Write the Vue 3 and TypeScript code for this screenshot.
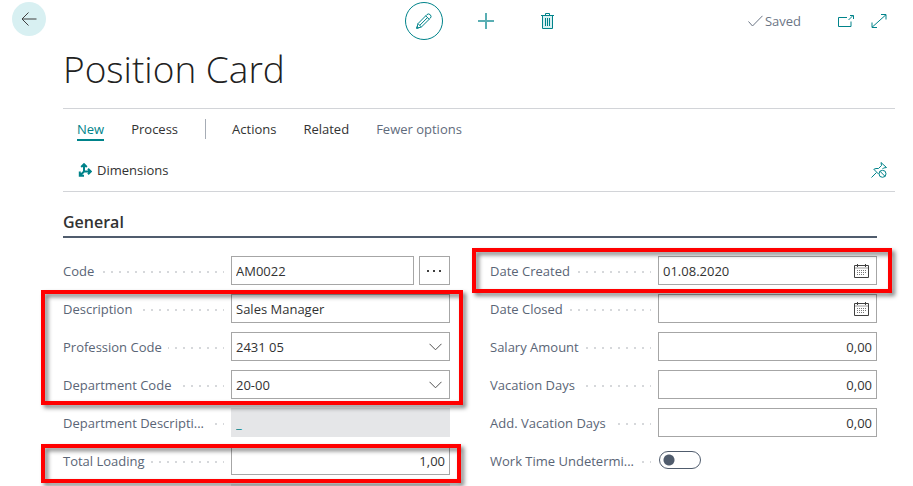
<script setup lang="ts">
import { ref } from 'vue'

interface Field {
  id: string
  label: string
  kind: 'text' | 'lookup' | 'select' | 'readonly' | 'number' | 'date' | 'toggle'
  value: string
}

interface Group {
  mark: string
  fields: Field[]
}

const left = ref<Group[]>([
  { mark: '', fields: [{ id: 'code', label: 'Code', kind: 'lookup', value: 'AM0022' }] },
  {
    mark: 'mark-block',
    fields: [
      { id: 'description', label: 'Description', kind: 'text', value: 'Sales Manager' },
      { id: 'profession', label: 'Profession Code', kind: 'select', value: '2431 05' },
      { id: 'department', label: 'Department Code', kind: 'select', value: '20-00' },
    ],
  },
  { mark: '', fields: [{ id: 'department-text', label: 'Department Descripti...', kind: 'readonly', value: '_' }] },
  { mark: 'mark-total', fields: [{ id: 'loading', label: 'Total Loading', kind: 'number', value: '1,00' }] },
])

const right = ref<Group[]>([
  { mark: 'mark-date', fields: [{ id: 'created', label: 'Date Created', kind: 'date', value: '01.08.2020' }] },
  {
    mark: '',
    fields: [
      { id: 'closed', label: 'Date Closed', kind: 'date', value: '' },
      { id: 'salary', label: 'Salary Amount', kind: 'number', value: '0,00' },
      { id: 'vacation', label: 'Vacation Days', kind: 'number', value: '0,00' },
      { id: 'add-vacation', label: 'Add. Vacation Days', kind: 'number', value: '0,00' },
      { id: 'work-time', label: 'Work Time Undetermi...', kind: 'toggle', value: '' },
    ],
  },
])

const columns = [left, right]
</script>

<template>
  <div class="page">
    <header class="topbar">
      <button class="back" type="button" aria-label="Back">
        <svg width="16" height="14" viewBox="0 0 16 14"><path d="M15.500 7H1M7.500 .5L1 7l6.500 6.500" /></svg>
      </button>
      <div class="tools">
        <button class="tool edit" type="button" aria-label="Edit">
          <svg width="16" height="16" viewBox="0 0 16 16">
            <path d="M.7 15.300l1.300-4.700L11 1.500a2.500 2.500 0 0 1 3.500 3.500L5.400 14zM2 10.600L5.400 14M9.700 2.800l3.500 3.500M3.800 12.300l7.600-7.600M.7 15.300l1.800-.5-1.300-1.300z" />
          </svg>
        </button>
        <button class="tool" type="button" aria-label="New">
          <svg width="16" height="16" viewBox="0 0 16 16"><path class="plus" d="M8 0v16M0 8h16" /></svg>
        </button>
        <button class="tool delete" type="button" aria-label="Delete">
          <svg width="13" height="16" viewBox="0 0 13 16">
            <path class="tint" d="M2 3h9v12H2z" />
            <path d="M0 2.500h13M4.500 2.500V.5h4v2M1.500 2.500v13h10v-13M4.500 5v8M6.500 5v8M8.500 5v8" />
          </svg>
        </button>
      </div>
      <div class="status">
        <span class="saved">
          <svg width="15" height="12" viewBox="0 0 15 12"><path d="M.5 6.500l4 4.500L14.500 .8" /></svg>Saved
        </span>
        <button class="tool" type="button" aria-label="Open in new window">
          <svg width="16" height="12" viewBox="0 0 16 12">
            <path d="M9 2.500H.5v9h12.500V6.500M10.500 5l4.500-4.500M12 .5h3.500V4" />
          </svg>
        </button>
        <button class="tool" type="button" aria-label="Expand">
          <svg width="16" height="14" viewBox="0 0 16 14"><path d="M1 13.300L15 .7M10 .5h5v5M1 8.500v5h5" /></svg>
        </button>
      </div>
    </header>

    <main class="card">
      <h1>Position Card</h1>

      <nav class="ribbon">
        <div class="tabs">
          <a class="active" href="#new">New</a>
          <a href="#process">Process</a>
          <a class="actions" href="#actions">Actions</a>
          <a href="#related">Related</a>
          <a class="soft" href="#fewer">Fewer options</a>
        </div>
        <div class="commands">
          <a class="command" href="#dimensions">
            <svg width="14" height="14" viewBox="0 0 14 14">
              <path class="bold" d="M6 9V1.500M3.200 4L6 1.200 8.800 4M6 8.500h6.500M10 5.700l2.800 2.800L10 11.300M6 8.500L2 12.500M1.800 8.500v4.200H6" />
            </svg>
            Dimensions
          </a>
          <button class="tool" type="button" aria-label="Unpin">
            <svg width="16" height="16" viewBox="0 0 16 16">
              <path d="M.5 15.500L5.500 10.500M7.500 12L2.800 7.300 5 6.500h2.500L10.500 3.500 10 .5l5.500 5-3 .5-1 1" />
              <circle cx="11.500" cy="11.800" r="3.500" /><path d="M9 9.300l5 5" />
            </svg>
          </button>
        </div>
      </nav>

      <section class="general">
        <h2>General</h2>
        <form class="columns" @submit.prevent>
          <div v-for="(column, c) in columns" :key="c" class="column">
            <div v-for="(group, g) in column.value" :key="g" class="group" :class="group.mark">
              <div v-for="field in group.fields" :key="field.id" class="row">
                <label :for="field.id">{{ field.label }}</label>
                <span class="dots"></span>
                <div class="control" :class="field.kind">
                  <input v-if="field.kind === 'toggle'" :id="field.id" class="switch" type="checkbox" role="switch" />
                  <template v-else-if="field.kind === 'select'">
                    <select :id="field.id" v-model="field.value">
                      <option>{{ field.value }}</option>
                    </select>
                    <svg class="chevron" width="13" height="8" viewBox="0 0 13 8"><path d="M.5 .8l6 6 6-6" /></svg>
                  </template>
                  <template v-else>
                    <input :id="field.id" v-model="field.value" type="text" :readonly="field.kind === 'readonly'" />
                    <button v-if="field.kind === 'lookup'" class="more" type="button" aria-label="More">
                      <svg width="15" height="2" viewBox="0 0 15 2"><path d="M0 0h2v2H0zM6 0h2v2H6zM12 0h2v2h-2z" /></svg>
                    </button>
                    <button v-if="field.kind === 'date'" class="calendar" type="button" aria-label="Pick a date">
                      <svg width="15" height="14" viewBox="0 0 15 14">
                        <path class="frame" d="M.5 1.500h14v12H.5zM3.500 0v3M11.500 0v3" />
                        <path class="band" d="M1 4h13" />
                        <path class="days" d="M3 6.500h10M3 8.500h10M3 10.500h8" />
                      </svg>
                    </button>
                  </template>
                </div>
              </div>
            </div>
            <div v-if="c === 0" class="row"><div class="next"></div></div>
          </div>
        </form>
      </section>
    </main>
  </div>
</template>

<style>
body {
  margin: 0;
  background: #fff;
}
</style>

<style scoped>
.page {
  height: 100vh;
  overflow: hidden;
  box-sizing: border-box;
  color: #323232;
  font: 13px/20px "Open Sans", "Segoe UI", sans-serif;
}

.page *,
.page *::after {
  box-sizing: border-box;
}

button {
  display: flex;
  align-items: center;
  justify-content: center;
  margin: 0;
  padding: 0;
  border: 0;
  background: none;
}

svg {
  display: block;
  flex: none;
  fill: none;
  stroke: #00838a;
}

a {
  color: inherit;
  text-decoration: none;
}

.topbar {
  display: grid;
  grid-template-columns: 51px 1fr auto 1fr;
  height: 42px;
  padding: 0 18px 0 12px;
}

.back {
  width: 34px;
  height: 34px;
  margin-top: 2px;
  border-radius: 50%;
  background: #d8f0f2;
}

.back svg {
  stroke: #404040;
}

.tools {
  display: flex;
  grid-column: 3;
  align-items: center;
  gap: 35px;
}

.tool {
  height: 20px;
}

.edit {
  width: 38px;
  height: 38px;
  border: 1px solid #00838a;
  border-radius: 50%;
}

.delete {
  margin-left: 12px;
}

.plus {
  stroke-width: 2;
  opacity: 0.65;
}

.tint {
  fill: #d8f0f2;
  stroke: none;
}

.status {
  display: flex;
  align-items: center;
  justify-content: flex-end;
  gap: 17px;
  padding-right: 8px;
}

.saved {
  display: flex;
  align-items: center;
  gap: 2px;
  margin-right: 20px;
  color: #6b7585;
}

.saved svg {
  stroke: #6b7585;
}

.card {
  padding: 0 18px 0 63px;
}

h1 {
  margin: 0;
  padding-bottom: 12px;
  color: #212121;
  font-size: 37px;
  font-weight: 300;
  line-height: 54px;
}

.ribbon {
  border-top: 1px solid #d2d4d8;
  border-bottom: 1px solid #d2d4d8;
}

.tabs {
  display: flex;
  align-items: center;
  gap: 27px;
  height: 41px;
  padding: 0 0 2px 14px;
}

.active {
  padding-top: 2px;
  border-bottom: 2px solid #00838a;
  color: #00838a;
}

.actions {
  padding-left: 26px;
  border-left: 1px solid #a6acb5;
}

.soft {
  color: #5f6b7c;
}

.commands {
  display: flex;
  align-items: center;
  justify-content: space-between;
  height: 41px;
  padding: 0 8px 2px 15px;
}

.command {
  display: flex;
  align-items: center;
  gap: 5px;
}

.bold {
  stroke-width: 2;
}

.general {
  margin-right: 18px;
  padding-top: 18px;
}

h2 {
  margin: 0;
  padding-bottom: 2px;
  border-bottom: 2px solid #505c6d;
  color: #323232;
  font-size: 16px;
  font-weight: 600;
  line-height: 24px;
}

.columns {
  display: grid;
  grid-template-columns: 1fr 1fr;
  gap: 40px;
  padding-top: 18px;
}

.column,
.group {
  display: flex;
  flex-direction: column;
  gap: 9px;
}

.group {
  position: relative;
}

/* Red callout frames laid over the form */
.mark-block::after,
.mark-total::after,
.mark-date::after {
  content: "";
  position: absolute;
  border: 4px solid #f00;
  filter: drop-shadow(3px 3px 2px rgba(0, 0, 0, 0.5));
  pointer-events: none;
}

.mark-block::after {
  inset: -4px -13px -6px -22px;
}

.mark-total::after {
  inset: -2px -11px -8px -22px;
}

.mark-date::after {
  inset: -8px -15px -8px -18px;
}

.mark-block,
.mark-total,
.mark-date {
  z-index: 1;
}

.row {
  display: flex;
  align-items: center;
  height: 29px;
}

.row > label {
  color: #5a6576;
  white-space: nowrap;
}

.dots {
  flex: 1;
  height: 2px;
  margin: 2px 7px 0 6px;
  background: repeating-linear-gradient(to left, #d6d8db 0 1px, transparent 1px 7px, #d6d8db 7px 8px);
}

.control,
.next {
  position: relative;
  display: flex;
  flex: none;
  gap: 5px;
  width: calc(100% - 168px);
  height: 29px;
}

input[type="text"],
select {
  flex: 1;
  min-width: 0;
  height: 29px;
  margin: 0;
  padding: 0 4px;
  border: 1px solid #a6a6a6;
  border-radius: 0;
  outline: 0;
  background: #fff;
  color: #323232;
  font: inherit;
  appearance: none;
}

.number input[type="text"] {
  text-align: right;
}

.readonly input[type="text"] {
  border-color: #e5e6e8;
  background: #e5e6e8;
  color: #00838a;
}

.more {
  width: 31px;
  border: 1px solid #a6a6a6;
}

.more svg {
  fill: #404040;
  stroke: none;
}

.chevron {
  position: absolute;
  top: 11px;
  right: 8px;
  stroke: #505050;
  pointer-events: none;
}

.calendar {
  position: absolute;
  top: 8px;
  right: 8px;
}

.calendar svg {
  stroke: #404040;
}

.calendar .band {
  stroke: #9a9a9a;
}

.calendar .days {
  stroke: #777;
  stroke-dasharray: 1 1;
}

.switch {
  width: 42px;
  height: 18px;
  margin: 5px 1px;
  border: 1px solid #505c6d;
  border-radius: 9px;
  background: radial-gradient(circle at 9px 8px, #505c6d 5px, transparent 6px);
  appearance: none;
}

.next {
  margin-left: auto;
  background: #e5e6e8;
}
</style>
